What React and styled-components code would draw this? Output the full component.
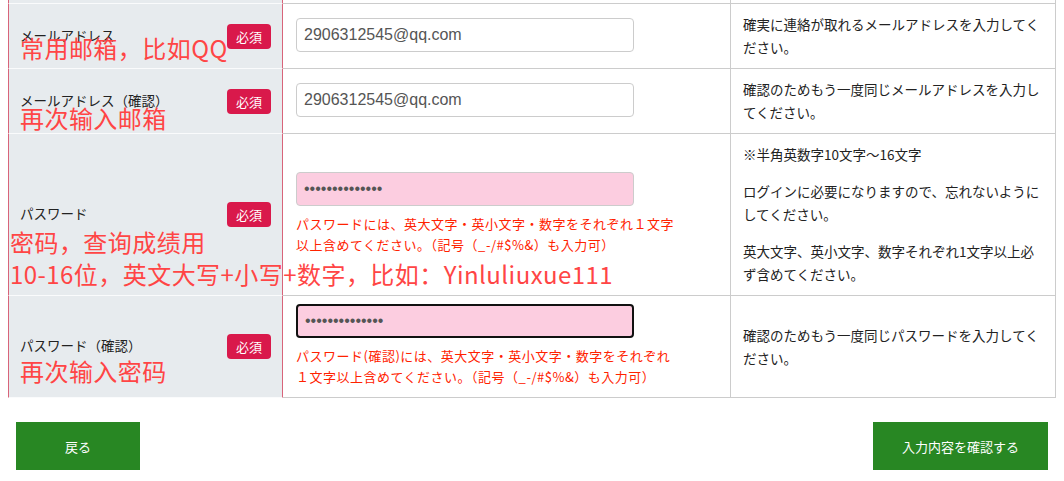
import styled, { createGlobalStyle } from "styled-components";

const GlobalStyle = createGlobalStyle`
  body {
    margin: 0;
    background: #fff;
    font-family: "Noto Sans CJK JP", "Liberation Sans", sans-serif;
    color: #222;
  }
`;

const rows = [
  {
    label: "メールアドレス",
    type: "text",
    value: "2906312545@qq.com",
    help: ["確実に連絡が取れるメールアドレスを入力してください。"],
    notes: [{ text: "常用邮箱，比如QQ", top: 32, left: 11 }],
  },
  {
    label: "メールアドレス（確認）",
    type: "text",
    value: "2906312545@qq.com",
    help: ["確認のためもう一度同じメールアドレスを入力してください。"],
    notes: [{ text: "再次输入邮箱", top: 37, left: 11 }],
  },
  {
    label: "パスワード",
    type: "password",
    value: "Yinluliuxue111",
    error:
      "パスワードには、英大文字・英小文字・数字をそれぞれ１文字以上含めてください。（記号（_-/#$%&）も入力可）",
    help: [
      "※半角英数字10文字〜16文字",
      "ログインに必要になりますので、忘れないようにしてください。",
      "英大文字、英小文字、数字それぞれ1文字以上必ず含めてください。",
    ],
    notes: [
      { text: "密码，查询成绩用", top: 96, left: 1 },
      { text: "10-16位，英文大写+小写+数字，比如：Yinluliuxue111", top: 128, left: 1 },
    ],
  },
  {
    label: "パスワード（確認）",
    type: "password",
    value: "Yinluliuxue111",
    focused: true,
    error:
      "パスワード(確認)には、英大文字・英小文字・数字をそれぞれ１文字以上含めてください。（記号（_-/#$%&）も入力可）",
    help: ["確認のためもう一度同じパスワードを入力してください。"],
    notes: [{ text: "再次输入密码", top: 63, left: 11 }],
  },
];

export default function App() {
  return (
    <Page>
      <GlobalStyle />
      <Table>
        <Row>
          <LabelCell $sliver />
          <InputCell $sliver />
          <HelpCell $sliver />
        </Row>
        {rows.map((row, index) => (
          <Row key={index}>
            <LabelCell>
              <LabelText>{row.label}</LabelText>
              <Badge>必須</Badge>
              {row.notes.map((note, i) => (
                <Note key={i} $top={note.top} $left={note.left}>
                  {note.text}
                </Note>
              ))}
            </LabelCell>
            <InputCell>
              <Field
                type={row.type}
                value={row.value}
                readOnly
                $pink={row.type === "password"}
                $focused={row.focused}
              />
              {row.error ? <ErrorText>{row.error}</ErrorText> : null}
            </InputCell>
            <HelpCell>
              {row.help.map((line, i) => (
                <HelpText key={i}>{line}</HelpText>
              ))}
            </HelpCell>
          </Row>
        ))}
      </Table>
      <Actions>
        <Button $width={124}>戻る</Button>
        <Button $width={175}>入力内容を確認する</Button>
      </Actions>
    </Page>
  );
}

const Page = styled.div`
  padding: 0 8px;
  width: 1048px;
`;

const Table = styled.div`
  display: flex;
  flex-direction: column;
`;

const Row = styled.div`
  display: grid;
  grid-template-columns: 275px 448px 325px;
`;

const LabelCell = styled.div`
  position: relative;
  box-sizing: border-box;
  height: ${(p) => (p.$sliver ? "4px" : "auto")};
  display: flex;
  align-items: center;
  justify-content: space-between;
  padding: 0 11px;
  background: #e7ebee;
  border-left: 1px solid #d8647a;
  border-right: 1px solid #d8647a;
  border-bottom: 1px solid #fafbfc;
`;

const LabelText = styled.span`
  font-size: 13.5px;
  line-height: 20px;
  margin-top: -3px;
  color: #222;
`;

const Badge = styled.span`
  display: flex;
  align-items: center;
  justify-content: center;
  width: 44px;
  height: 25px;
  border-radius: 4px;
  background: #d9194b;
  color: #fff;
  font-size: 13px;
  line-height: 1;
`;

const Note = styled.span`
  position: absolute;
  top: ${(p) => p.$top}px;
  left: ${(p) => p.$left}px;
  white-space: nowrap;
  font-family: "Noto Sans CJK SC", "Liberation Sans", sans-serif;
  font-size: 24px;
  line-height: 24px;
  letter-spacing: 0.45px;
  color: #ff4545;
  z-index: 2;
`;

const InputCell = styled.div`
  box-sizing: border-box;
  height: ${(p) => (p.$sliver ? "4px" : "auto")};
  display: flex;
  flex-direction: column;
  justify-content: center;
  padding: ${(p) => (p.$sliver ? "0" : "8px 13px 10px")};
  border-right: 1px solid #ccc;
  border-bottom: 1px solid #ccc;
`;

const Field = styled.input`
  box-sizing: border-box;
  width: 338px;
  height: 34px;
  padding: 0 7px;
  border: ${(p) => (p.$focused ? "2px solid #111" : "1px solid #ccc")};
  border-radius: 4px;
  background: ${(p) => (p.$pink ? "#fccde0" : "#fff")};
  color: #555;
  font-family: "Liberation Sans", Arial, sans-serif;
  font-size: 16px;
  outline: none;
`;

const ErrorText = styled.div`
  margin-top: 7px;
  width: 383px;
  font-size: 13px;
  line-height: 21px;
  letter-spacing: 0.5px;
  color: #ff2200;
`;

const HelpCell = styled.div`
  box-sizing: border-box;
  height: ${(p) => (p.$sliver ? "4px" : "auto")};
  display: flex;
  flex-direction: column;
  justify-content: center;
  gap: 14px;
  padding: ${(p) => (p.$sliver ? "0" : "9px 12px")};
  border-right: 1px solid #ccc;
  border-bottom: 1px solid #ccc;
`;

const HelpText = styled.p`
  margin: 0;
  font-size: 13.5px;
  line-height: 23px;
  color: #222;
`;

const Actions = styled.div`
  display: flex;
  justify-content: space-between;
  padding: 24px 8px 0;
`;

const Button = styled.button`
  width: ${(p) => p.$width}px;
  height: 48px;
  border: none;
  border-radius: 0;
  background: #288723;
  color: #fff;
  font-family: "Noto Sans CJK JP", sans-serif;
  font-size: 13px;
  cursor: pointer;
`;
